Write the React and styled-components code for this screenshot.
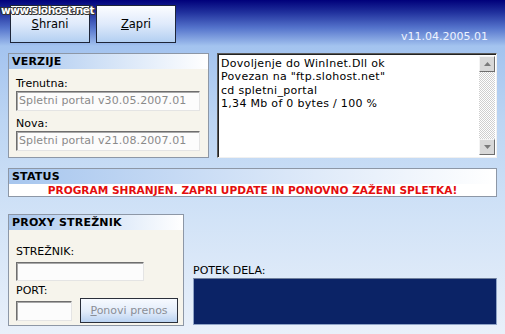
import React from 'react';
import styled, { createGlobalStyle } from 'styled-components';

const Global = createGlobalStyle`
  html, body { margin: 0; padding: 0; }
  body {
    width: 505px;
    height: 334px;
    overflow: hidden;
    font-family: "DejaVu Sans", Verdana, sans-serif;
    font-size: 11px;
    color: #000;
  }
`;

const Page = styled.div`
  position: relative;
  width: 505px;
  height: 334px;
  box-sizing: border-box;
  padding: 0 8px;
  background: linear-gradient(180deg, #00007a 0px, #1f2f9c 12px, #5574cc 28px, #a3c3ef 46px, #bcd5f3 120px, #d2e3f7 220px, #e9f0fa 334px);
  display: flex;
  flex-direction: column;
`;

const Watermark = styled.div`
  position: absolute;
  left: 1px;
  top: 4px;
  font-family: "DejaVu Sans", Verdana, sans-serif;
  font-weight: bold;
  font-size: 10.5px;
  letter-spacing: -0.4px;
  color: #fff;
  text-shadow: 1px 0 0 #333, -1px 0 0 #333, 0 1px 0 #333, 0 -1px 0 #333, 1px 1px 0 #333, -1px -1px 0 #333;
  z-index: 2;
`;

const TopBar = styled.div`
  height: 53px;
  display: flex;
  align-items: flex-start;
  padding-top: 5px;
  padding-left: 2px;
  box-sizing: border-box;
  gap: 6px;
`;

const BigButton = styled.button`
  width: 80px;
  height: 38px;
  border: 1px solid #1d2538;
  background: linear-gradient(180deg, #fcfdff 0%, #dfeafb 50%, #b3cff2 100%);
  font-family: "DejaVu Sans", Verdana, sans-serif;
  font-size: 11.5px;
  color: #000;
  padding: 0;
  u { text-decoration: underline; }
`;

const Version = styled.div`
  margin-left: auto;
  margin-top: 25px;
  margin-right: 9px;
  color: #eef3ff;
  font-size: 11px;
`;

const Row = styled.div`
  display: flex;
  gap: ${p => p.gap ?? 8}px;
  height: ${p => p.h}px;
  margin-bottom: ${p => p.mb || 0}px;
`;

const Panel = styled.div`
  width: ${p => p.w}px;
  box-sizing: border-box;
  border: 1px solid #8d97a6;
  background: ${p => p.bg || '#f6f4ec'};
  display: flex;
  flex-direction: column;
`;

const PanelHead = styled.div`
  height: 15px;
  line-height: 15px;
  padding-left: 3px;
  font-weight: bold;
  font-size: 11px;
  letter-spacing: 0.2px;
  background: linear-gradient(90deg, #a7c6ee 0%, #cfe0f6 45%, #ffffff 100%);
  color: #000;
`;

const PanelBody = styled.div`
  padding: ${p => p.pad};
  display: flex;
  flex-direction: column;
`;

const Label = styled.div`
  height: 14px;
  line-height: 14px;
  color: #000;
  margin-top: ${p => p.mt || 0}px;
  font-size: 11px;
`;

const Field = styled.div`
  width: ${p => p.w}px;
  height: ${p => p.h || 20}px;
  margin-top: ${p => p.mt || 0}px;
  box-sizing: border-box;
  border: 1px solid;
  border-color: #6e6e6e #e4e4e4 #e4e4e4 #6e6e6e;
  box-shadow: inset 1px 1px 0 #a8a8a8;
  background: #fcfcfc;
  color: #8a8a8a;
  line-height: 18px;
  padding-left: 2px;
  font-size: 11px;
  letter-spacing: 0.1px;
  white-space: nowrap;
  overflow: hidden;
`;

const LogBox = styled.div`
  flex: 1;
  box-sizing: border-box;
  border: 1px solid;
  border-color: #5a5a5a #f0f0f0 #f0f0f0 #5a5a5a;
  box-shadow: inset 1px 1px 0 #222;
  background: #fff;
  display: flex;
`;

const LogText = styled.div`
  flex: 1;
  padding: 3px 0 0 3px;
  line-height: 13.3px;
  font-size: 11px;
  letter-spacing: 0.3px;
  white-space: pre;
`;

const Scroll = styled.div`
  width: 16px;
  margin: 2px 1px 2px 0;
  display: flex;
  flex-direction: column;
  justify-content: space-between;
  background-color: #fff;
  background-image: conic-gradient(#cfcfcf 25%, #fff 0 50%, #cfcfcf 0 75%, #fff 0);
  background-size: 2px 2px;
`;

const ScrollBtn = styled.div`
  width: 16px;
  height: 16px;
  box-sizing: border-box;
  background: #d8d8d8;
  border: 1px solid;
  border-color: #f4f4f4 #6e6e6e #6e6e6e #f4f4f4;
  display: flex;
  align-items: center;
  justify-content: center;
`;

const StatusMsg = styled.div`
  text-align: center;
  color: #e30d0d;
  font-weight: bold;
  font-size: 10.6px;
  line-height: 12px;
  height: 12px;
  letter-spacing: 0;
`;

const SmallButton = styled.button`
  width: 98px;
  height: 25px;
  margin-left: 8px;
  border: 1px solid #2a2f3a;
  background: linear-gradient(180deg, #f7faff 0%, #e2ecfa 55%, #b9d2f1 100%);
  color: #8a8e96;
  font-family: "DejaVu Sans", Verdana, sans-serif;
  font-size: 11px;
  padding: 0;
`;

const WorkCol = styled.div`
  flex: 1;
  display: flex;
  flex-direction: column;
  justify-content: flex-end;
  padding-left: 1px;
  padding-bottom: 1px;
`;

const Progress = styled.div`
  height: 47px;
  box-sizing: border-box;
  background: #0b2366;
  border: 1px solid #8fa3c6;
  border-top-color: #6f7f9c;
`;

const Arrow = ({ up }) => (
  <svg width="7" height="4" viewBox="0 0 7 4">
    <path d={up ? 'M0 4 L3.5 0 L7 4 Z' : 'M0 0 L3.5 4 L7 0 Z'} fill="#7a7a7a" />
  </svg>
);

export default function App() {
  return (
    <>
      <Global />
      <Page>
        <Watermark>www.slohost.net</Watermark>
        <TopBar>
          <BigButton><u>S</u>hrani</BigButton>
          <BigButton><u>Z</u>apri</BigButton>
          <Version>v11.04.2005.01</Version>
        </TopBar>

        <Row h={105} mb={10}>
          <Panel w={201}>
            <PanelHead>VERZIJE</PanelHead>
            <PanelBody pad="8px 0 0 7px">
              <Label>Trenutna:</Label>
              <Field w={184}>Spletni portal v30.05.2007.01</Field>
              <Label mt={6}>Nova:</Label>
              <Field w={184}>Spletni portal v21.08.2007.01</Field>
            </PanelBody>
          </Panel>
          <LogBox>
            <LogText>{'Dovoljenje do WinInet.Dll ok\nPovezan na "ftp.slohost.net"\ncd spletni_portal\n1,34 Mb of 0 bytes / 100 %'}</LogText>
            <Scroll>
              <ScrollBtn><Arrow up /></ScrollBtn>
              <ScrollBtn><Arrow /></ScrollBtn>
            </Scroll>
          </LogBox>
        </Row>

        <Row h={29} mb={17}>
          <Panel w={491} bg="#fff">
            <PanelHead>STATUS</PanelHead>
            <StatusMsg>PROGRAM SHRANJEN. ZAPRI UPDATE IN PONOVNO ZAŽENI SPLETKA!</StatusMsg>
          </Panel>
        </Row>

        <Row h={112} gap={8}>
          <Panel w={176}>
            <PanelHead>PROXY STREŽNIK</PanelHead>
            <PanelBody pad="15px 0 0 7px">
              <Label>STREŽNIK:</Label>
              <Field w={128} h={19} mt={3} />
              <Label mt={3}>PORT:</Label>
              <Row h={25} gap={0}>
                <Field w={56} h={20} mt={3} />
                <SmallButton><u>P</u>onovi prenos</SmallButton>
              </Row>
            </PanelBody>
          </Panel>
          <WorkCol>
            <Label>POTEK DELA:</Label>
            <Progress />
          </WorkCol>
        </Row>
      </Page>
    </>
  );
}
